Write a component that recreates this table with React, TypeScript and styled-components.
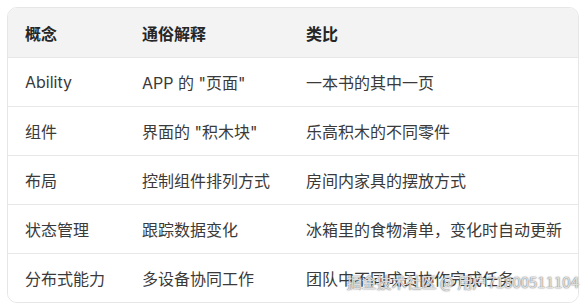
import React from "react";
import styled, { createGlobalStyle } from "styled-components";

const Global = createGlobalStyle`
  html, body { margin: 0; padding: 0; background: #ffffff; }
  body { font-family: Inter, "Noto Sans CJK SC", sans-serif; }
`;

const Page = styled.div`
  position: relative;
  width: 587px;
  height: 303px;
  padding: 7px 8px 0 7px;
  box-sizing: border-box;
`;

const Table = styled.div`
  border: 1px solid #e6e6e6;
  border-radius: 10px;
  overflow: hidden;
  background: #ffffff;
`;

const Row = styled.div<{ $head?: boolean }>`
  display: grid;
  grid-template-columns: 117px 164px 1fr;
  height: ${(p) => (p.$head ? 49 : 48)}px;
  align-items: center;
  background: ${(p) => (p.$head ? "#f3f3f3" : "#ffffff")};
  border-top: ${(p) => (p.$head ? "none" : "1px solid #e8e8e8")};
  font-size: 16px;
  font-weight: ${(p) => (p.$head ? 700 : 400)};
  color: ${(p) => (p.$head ? "#262626" : "#3a3a3a")};
`;

const Cell = styled.div`
  padding-left: 17px;
  white-space: nowrap;
`;

const Watermark = styled.div`
  position: absolute;
  right: 8px;
  bottom: 11px;
  font-family: "Noto Sans CJK SC", sans-serif;
  font-size: 15px;
  color: rgba(255, 255, 255, 0.8);
  text-shadow: 0 0 1px rgba(80, 80, 80, 0.9), 0 0 2px rgba(80, 80, 80, 0.5);
  white-space: nowrap;
  pointer-events: none;
`;

const head = ["概念", "通俗解释", "类比"];
const rows = [
  ["Ability", 'APP 的 "页面"', "一本书的其中一页"],
  ["组件", '界面的 "积木块"', "乐高积木的不同零件"],
  ["布局", "控制组件排列方式", "房间内家具的摆放方式"],
  ["状态管理", "跟踪数据变化", "冰箱里的食物清单，变化时自动更新"],
  ["分布式能力", "多设备协同工作", "团队中不同成员协作完成任务"],
];

export default function App() {
  return (
    <>
      <Global />
      <Page>
        <Table>
          <Row $head>
            {head.map((h) => (
              <Cell key={h}>{h}</Cell>
            ))}
          </Row>
          {rows.map((r) => (
            <Row key={r[0]}>
              {r.map((c) => (
                <Cell key={c}>{c}</Cell>
              ))}
            </Row>
          ))}
        </Table>
        <Watermark>掘金技术社区 @ 用户71800511104</Watermark>
      </Page>
    </>
  );
}
